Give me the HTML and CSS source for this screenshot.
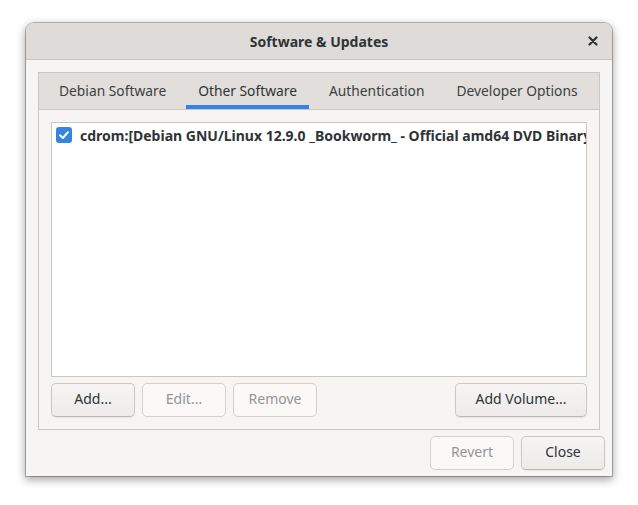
FILE: index.html
```html
<!DOCTYPE html>
<html lang="en">
<head>
    <meta charset="UTF-8">
    <title>Software &amp; Updates</title>
    <link rel="stylesheet" href="styles.css">
</head>
<body>

    <div class="window">
        <div class="titlebar">
            <span class="title">Software &amp; Updates</span>
            <span class="close-x">
                <svg width="10" height="10" viewBox="0 0 10 10">
                    <path d="M1.5 1.5 L8.5 8.5 M8.5 1.5 L1.5 8.5" stroke="#2e3436" stroke-width="2.2" stroke-linecap="round"/>
                </svg>
            </span>
        </div>

        <div class="content">
            <div class="notebook">
                <div class="tabs">
                    <div class="tab">Debian Software</div>
                    <div class="tab active">Other Software</div>
                    <div class="tab">Authentication</div>
                    <div class="tab">Developer Options</div>
                </div>

                <div class="page">
                    <div class="list">
                        <div class="row">
                            <span class="check">
                                <svg width="16" height="16" viewBox="0 0 16 16">
                                    <rect x="0" y="0" width="16" height="16" rx="3" fill="#3584e4"/>
                                    <path d="M4 8.3 L6.8 11 L12 5.2" fill="none" stroke="#fff" stroke-width="2" stroke-linecap="round" stroke-linejoin="round"/>
                                </svg>
                            </span>
                            <span class="source">cdrom:[Debian GNU/Linux 12.9.0 _Bookworm_ - Official amd64 DVD Binary</span>
                        </div>
                    </div>

                    <div class="list-buttons">
                        <button class="btn">Add...</button>
                        <button class="btn" disabled>Edit...</button>
                        <button class="btn" disabled>Remove</button>
                        <span class="spacer"></span>
                        <button class="btn wide">Add Volume...</button>
                    </div>
                </div>
            </div>

            <div class="dialog-buttons">
                <button class="btn" disabled>Revert</button>
                <button class="btn">Close</button>
            </div>
        </div>
    </div>

</body>
</html>
```

FILE: styles.css
```css
body {
    margin: 0;
    padding: 23px 26px;
    background-color: #ffffff;
    font-family: 'Noto Sans', 'DejaVu Sans', sans-serif;
    font-size: 14px;
    color: #2e3436;
}

.window {
    width: 586px;
    height: 453px;
    background-color: #f6f5f4;
    border-radius: 8px 8px 0 0;
    box-shadow: 0 0 0 1px rgba(0, 0, 0, 0.25), 0 3px 9px 1px rgba(0, 0, 0, 0.35);
    display: flex;
    flex-direction: column;
    overflow: hidden;
}

.titlebar {
    height: 36px;
    background-color: #dedbd8;
    border-bottom: 1px solid #c8c3be;
    display: flex;
    align-items: center;
    justify-content: center;
    position: relative;
}

.title {
    font-weight: bold;
    font-size: 14px;
    color: #2e3436;
}

.close-x {
    position: absolute;
    right: 14px;
    top: 13px;
    width: 10px;
    height: 10px;
    display: flex;
}

.content {
    padding: 12px 12px 0 12px;
    display: flex;
    flex-direction: column;
}

.notebook {
    height: 356px;
    border: 1px solid #cdc7c2;
    display: flex;
    flex-direction: column;
}

.tabs {
    height: 37px;
    background-color: #e1dedb;
    border-bottom: 1px solid #cdc7c2;
    display: flex;
    padding-left: 8px;
    box-sizing: border-box;
}

.tab {
    padding: 0 12px;
    margin-right: 8px;
    height: 36px;
    line-height: 36px;
    font-size: 13.8px;
    white-space: nowrap;
    color: #3d3f40;
    box-sizing: border-box;
    border-bottom: 4px solid transparent;
}

.tab.active {
    border-bottom-color: #3584e4;
    color: #2e3436;
}

.page {
    flex: 1;
    padding: 12px 12px 0 12px;
    display: flex;
    flex-direction: column;
}

.list {
    height: 253px;
    background-color: #ffffff;
    border: 1px solid #cdc7c2;
    overflow: hidden;
}

.row {
    display: flex;
    align-items: center;
    height: 24px;
    padding: 0 4px;
    white-space: nowrap;
}

.check {
    width: 16px;
    height: 16px;
    margin-right: 8px;
    flex-shrink: 0;
    display: flex;
}

.source {
    font-weight: bold;
    font-size: 14px;
    color: #2e3436;
}

.list-buttons {
    display: flex;
    gap: 7px;
    margin-top: 6px;
}

.spacer {
    flex: 1;
}

.btn {
    width: 84px;
    height: 34px;
    font-family: inherit;
    font-size: 14px;
    line-height: 30px;
    color: #2e3436;
    background: linear-gradient(#f6f5f4, #edebe9);
    border: 1px solid #cdc7c2;
    border-bottom-color: #bfb8b1;
    border-radius: 5px;
    box-shadow: 0 1px 1px rgba(0, 0, 0, 0.07);
    padding: 0 0 2px 0;
}

.btn:disabled {
    background: #faf9f8;
    border-color: #d5d0cc;
    color: #929595;
    box-shadow: none;
}

.btn.wide {
    width: 132px;
}

.dialog-buttons {
    display: flex;
    justify-content: flex-end;
    gap: 7px;
    margin-top: 6px;
    margin-right: -5px;
}
```
